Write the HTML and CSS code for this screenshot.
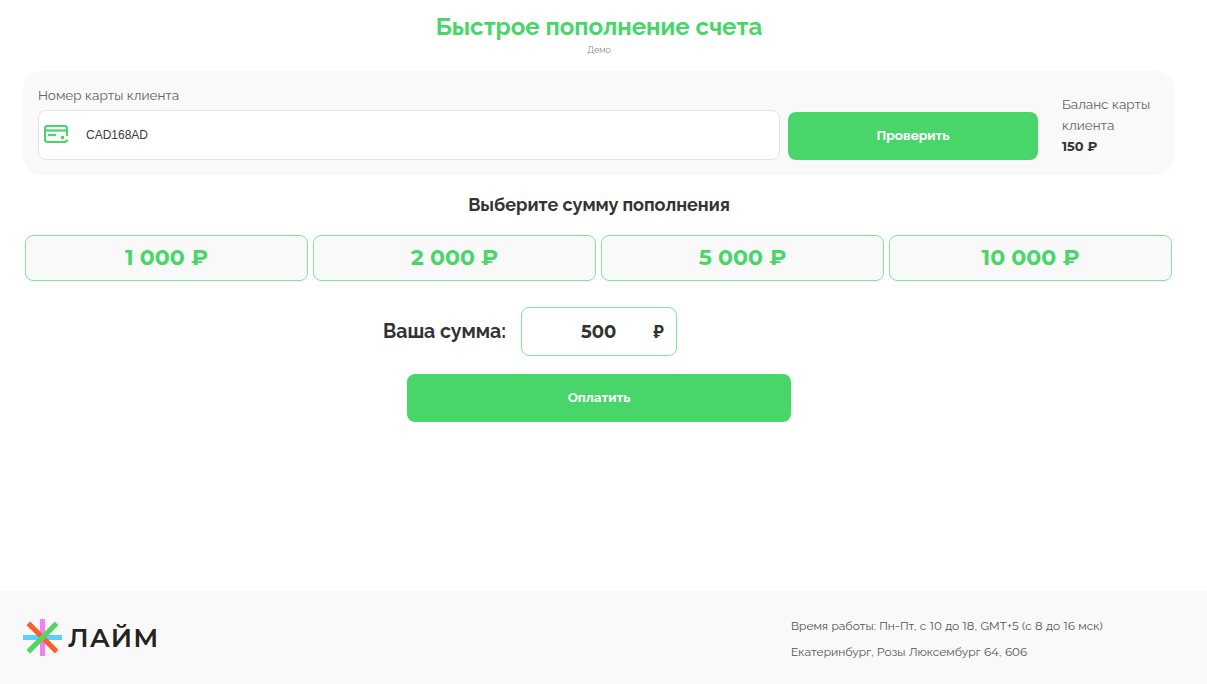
FILE: index.html
```html
<!DOCTYPE html>
<html lang="ru">

<head>
  <meta charset="UTF-8">
  <meta name="viewport" content="width=device-width, initial-scale=1.0">
  <title>Быстрое пополнение счета</title>
  <link rel="stylesheet" href="styles.css">
</head>

<body>
  <div class="page">
    <main class="content">
      <h1 class="title">Быстрое пополнение счета</h1>
      <div class="subtitle">Демо</div>

      <section class="card-panel">
        <div class="card-field">
          <label class="card-label" for="cardNumber">Номер карты клиента</label>
          <div class="card-input">
            <svg class="card-icon" width="24" height="18" viewBox="0 0 24 18" fill="none" stroke="#48d66a" stroke-width="2.200">
              <path d="M23 11V3.500a2.500 2.500 0 0 0-2.500-2.500h-17a2.500 2.500 0 0 0-2.500 2.500v11a2.500 2.500 0 0 0 2.500 2.500h17a2.500 2.500 0 0 0 2.500-2.500"/>
              <path d="M1 5.500h22"/>
              <path d="M4 10h8"/>
              <path d="M17 12.500h3" stroke-width="3"/>
            </svg>
            <span class="card-value" id="cardNumber">CAD168AD</span>
          </div>
        </div>
        <button class="btn btn-check">Проверить</button>
        <div class="balance">
          <div class="balance-label">Баланс карты клиента</div>
          <div class="balance-value">150 ₽</div>
        </div>
      </section>

      <h2 class="section-title">Выберите сумму пополнения</h2>
      <div class="amounts">
        <button class="amount">1 000 ₽</button>
        <button class="amount">2 000 ₽</button>
        <button class="amount">5 000 ₽</button>
        <button class="amount">10 000 ₽</button>
      </div>

      <div class="custom-sum">
        <span class="custom-label">Ваша сумма:</span>
        <div class="custom-input">
          <span class="custom-value">500</span>
          <span class="custom-currency">₽</span>
        </div>
      </div>
      <button class="btn btn-pay">Оплатить</button>
    </main>

    <footer class="footer">
      <div class="logo">
        <svg width="39" height="37" viewBox="0 0 39 37">
          <rect x="17" y="0" width="5" height="37" fill="#f77df0"/>
          <rect x="0" y="16" width="39" height="5" fill="#5cd0fb"/>
          <rect x="-0.500" y="16" width="40" height="5" fill="#f9602b" transform="rotate(45 19.500 18.500)"/>
          <rect x="-0.500" y="16" width="40" height="5" fill="#52d55f" transform="rotate(-45 19.500 18.500)"/>
        </svg>
        <span class="logo-text">ЛАЙМ</span>
      </div>
      <div class="contacts">
        <div>Время работы: Пн-Пт, с <span class="num">10</span> до <span class="num">18</span>, GMT+<span class="num">5</span> (с <span class="num">8</span> до <span class="num">16</span> мск)</div>
        <div>Екатеринбург, Розы Люксембург <span class="num">64</span>, <span class="num">606</span></div>
      </div>
    </footer>
  </div>
</body>

</html>
```

FILE: styles.css
```css
* {
  box-sizing: border-box;
}

body {
  margin: 0;
  font-family: 'Raleway', 'Montserrat', 'Lato', 'Noto Sans', sans-serif;
  color: #333;
  background: #fff;
}

.page {
  height: 684px;
  display: flex;
  flex-direction: column;
  overflow: hidden;
}

.content {
  flex: 1;
  padding: 0 32px 0 23px;
}

.title {
  margin: 12px 0 0;
  text-align: center;
  font-size: 24px;
  line-height: 30px;
  font-weight: 700;
  color: #48d66a;
}

.subtitle {
  margin-top: 1px;
  text-align: center;
  font-size: 9px;
  line-height: 14px;
  color: #888;
}

.card-panel {
  display: flex;
  align-items: flex-end;
  height: 104px;
  margin-top: 14px;
  padding: 0 15px 15px;
  background: #f9f9f9;
  border-radius: 20px;
}

.card-field {
  width: 742px;
}

.card-label {
  display: block;
  margin-bottom: 5px;
  font-size: 13.500px;
  line-height: 20px;
  color: #666;
}

.card-input {
  display: flex;
  align-items: center;
  height: 50px;
  padding-left: 5px;
  background: #fff;
  border: 1px solid #e4e4e4;
  border-radius: 8px;
}

.card-icon {
  flex-shrink: 0;
  margin-bottom: 2px;
}

.card-value {
  margin-left: 18px;
  font-family: 'Liberation Sans', sans-serif;
  font-size: 12px;
  color: #3c3c3c;
}

.btn {
  border: none;
  border-radius: 8px;
  background: #48d66a;
  color: #fff;
  font-family: inherit;
  font-size: 13.500px;
  font-weight: 700;
  padding: 0 0 2px;
}

.btn-check {
  width: 250px;
  height: 48px;
  margin-left: 8px;
}

.balance {
  width: 98px;
  margin-left: 24px;
  margin-bottom: 3px;
  font-size: 13.500px;
  line-height: 21px;
  color: #666;
}

.balance-value {
  font-family: 'Montserrat', sans-serif;
  font-size: 13px;
  font-weight: 700;
  color: #333;
}

.section-title {
  margin: 19px 0 0;
  text-align: center;
  font-size: 18px;
  line-height: 22px;
  font-weight: 700;
  color: #333;
}

.amounts {
  display: grid;
  grid-template-columns: repeat(4, 283px);
  gap: 5px;
  margin: 19px 0 0 2px;
}

.amount {
  height: 46px;
  padding: 0 0 2px;
  border: 1px solid #80e899;
  border-radius: 8px;
  background: #f9f9f9;
  color: #48d66a;
  font-family: 'Montserrat', sans-serif;
  font-size: 22px;
  font-weight: 700;
}

.custom-sum {
  display: flex;
  justify-content: flex-end;
  align-items: center;
  width: 654px;
  margin-top: 26px;
}

.custom-label {
  margin-right: 15px;
  font-size: 19.500px;
  font-weight: 700;
}

.custom-input {
  display: flex;
  align-items: center;
  width: 156px;
  height: 49px;
  padding: 0 12px 0 59px;
  border: 1px solid #80e899;
  border-radius: 8px;
  font-family: 'Montserrat', sans-serif;
  font-size: 18px;
  font-weight: 700;
}

.custom-value {
  flex: 1;
}

.custom-currency {
  font-family: 'Raleway', sans-serif;
}

.btn-pay {
  display: block;
  width: 384px;
  height: 48px;
  margin: 18px 0 0 384px;
}

.footer {
  display: flex;
  justify-content: space-between;
  height: 93px;
  padding: 0 103px 0 23px;
  background: #f9f9f9;
}

.logo {
  display: flex;
  align-items: center;
  gap: 6px;
}

.logo-text {
  font-family: 'Montserrat', sans-serif;
  font-size: 26px;
  font-weight: 600;
  letter-spacing: 1px;
  color: #222;
}

.contacts {
  width: 313px;
  padding-top: 22px;
  font-size: 12px;
  line-height: 26px;
  word-spacing: 0.300px;
  white-space: nowrap;
  color: #555;
}

.num {
  font-family: 'Montserrat', sans-serif;
  font-size: 11.800px;
}
```
